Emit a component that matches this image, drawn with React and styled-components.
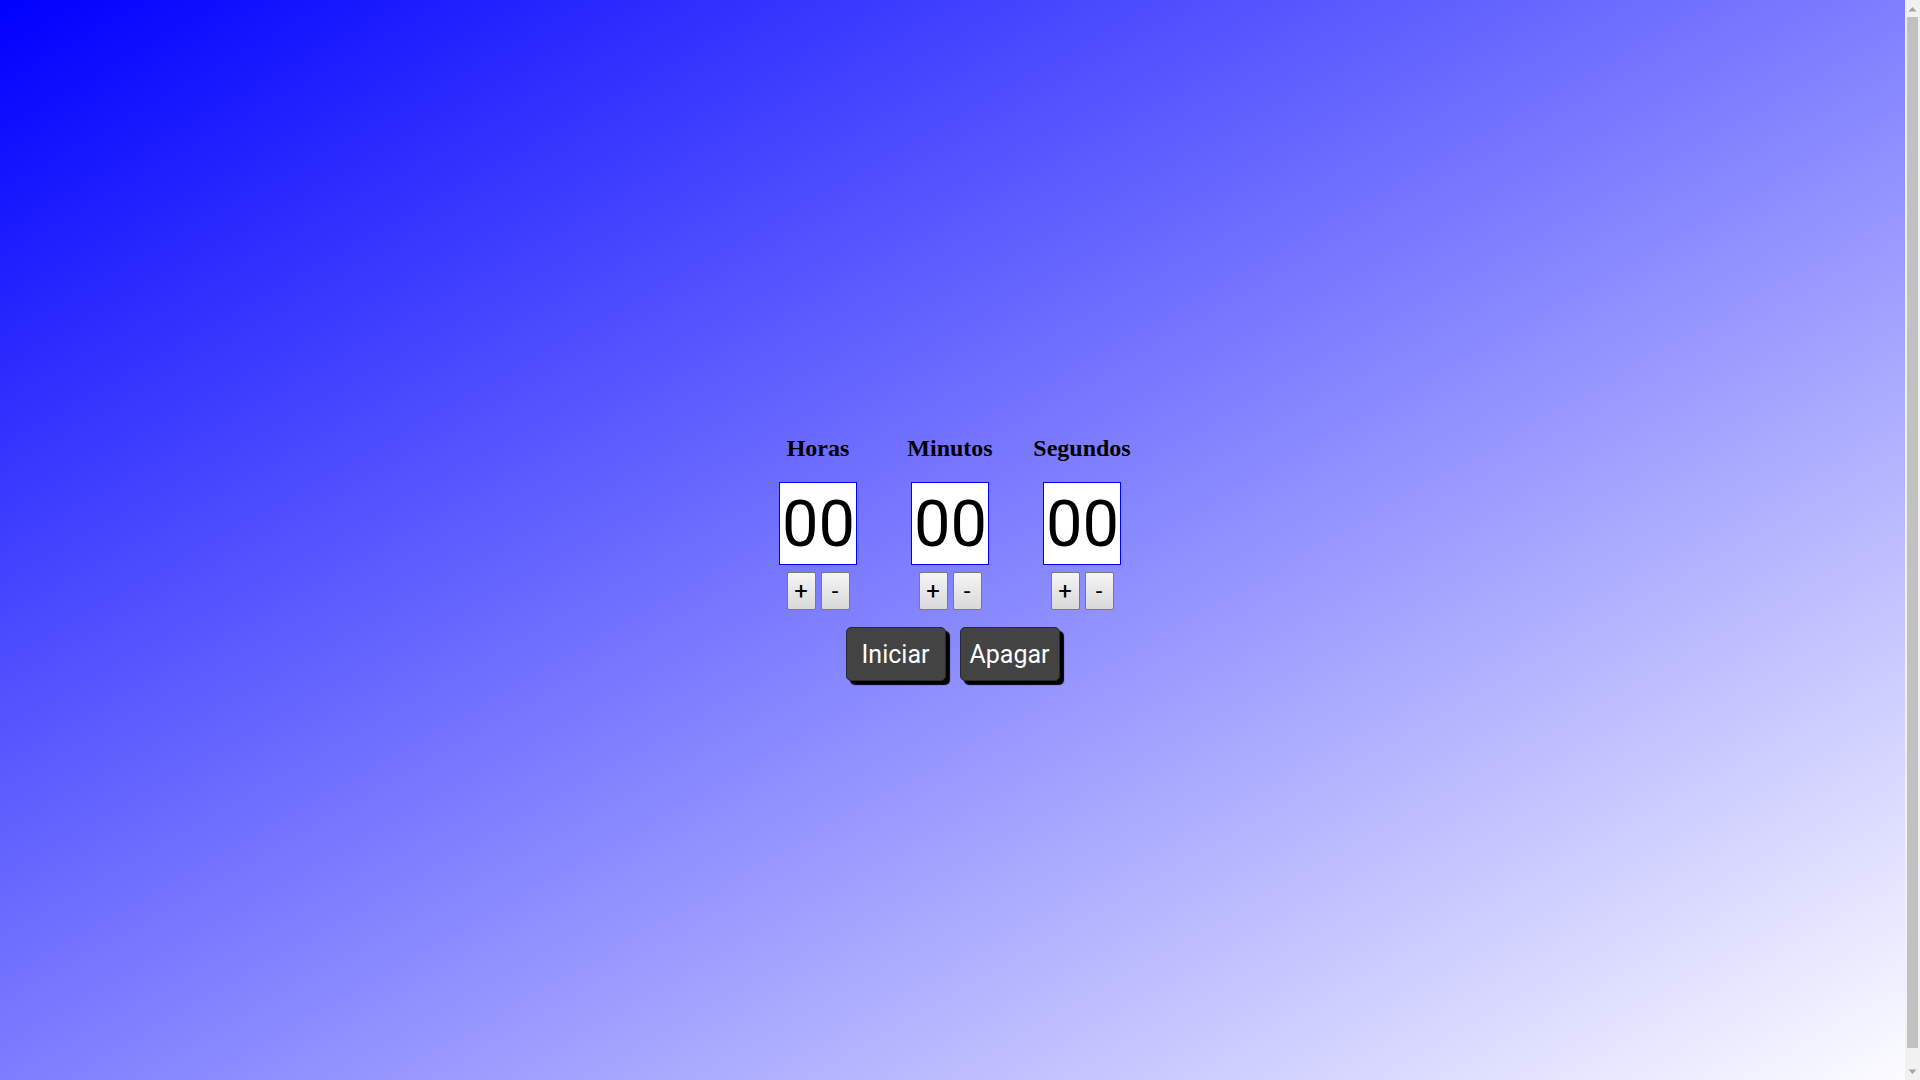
import React, { useState } from "react";
import styled, { createGlobalStyle } from "styled-components";

const GlobalStyle = createGlobalStyle`
  html {
    background: linear-gradient(to bottom right, #0000ff, #ffffff);
    min-height: 100%;
  }
  body {
    margin: 8px 23px 8px 8px;
    background: transparent;
    font-family: "Liberation Serif", "Times New Roman", serif;
  }
`;

const Page = styled.div`
  min-height: 100vh;
  display: flex;
  flex-direction: column;
  align-items: center;
  justify-content: center;
`;

const Units = styled.div`
  display: grid;
  grid-template-columns: repeat(3, 132px);
  margin-right: 5px;
`;

const Unit = styled.div`
  display: flex;
  flex-direction: column;
  align-items: center;
`;

const Label = styled.h2`
  margin: 20px 0;
  font-family: "Liberation Serif", "Times New Roman", serif;
  font-size: 24px;
  line-height: 27px;
  font-weight: bold;
  color: #000;
  white-space: nowrap;
`;

const Display = styled.input`
  box-sizing: border-box;
  width: 78px;
  height: 83px;
  padding: 1px 2px;
  border: 1px solid #0000ff;
  background: #ffffff;
  color: #000;
  font-family: Roboto, "Liberation Sans", sans-serif;
  font-size: 65px;
  outline: none;
`;

const StepRow = styled.div`
  display: flex;
  gap: 5px;
  margin-top: 7px;
`;

const StepButton = styled.button`
  box-sizing: border-box;
  width: 29px;
  height: 38px;
  padding: 0;
  border: 1px solid #7a7a7a;
  border-radius: 2px;
  background: linear-gradient(#f5f5f5, #d9d9d9);
  color: #000;
  font-family: Roboto, "Liberation Sans", sans-serif;
  font-size: 24px;
  line-height: 1;
  cursor: pointer;
`;

const Actions = styled.div`
  display: flex;
  gap: 14px;
  margin-top: 17px;
`;

const ActionButton = styled.button`
  box-sizing: border-box;
  width: 100px;
  height: 54px;
  padding: 0;
  border: 1px solid #2a2a2a;
  border-radius: 5px;
  background: #434343;
  color: #ffffff;
  font-family: Roboto, "Liberation Sans", sans-serif;
  font-size: 25px;
  box-shadow: 4px 4px 1px #000;
  cursor: pointer;
`;

const Scrollbar = styled.div`
  position: fixed;
  top: 0;
  right: 0;
  width: 15px;
  height: 100vh;
  background: #f1f1f1;
  display: flex;
  flex-direction: column;
`;

const ScrollArrow = styled.div`
  height: 17px;
  display: flex;
  align-items: center;
  justify-content: center;
  flex: none;
`;

const ScrollTrack = styled.div`
  flex: 1;
  display: flex;
  flex-direction: column;
  padding: 0 2px;
`;

const ScrollThumb = styled.div`
  flex: 1;
  margin-bottom: 15px;
  background: #c1c1c1;
`;

const Arrow = ({ down }) => (
  <svg width="9" height="6" viewBox="0 0 9 6">
    <polygon
      points={down ? "0.5,0.5 8.5,0.5 4.5,5" : "0.5,5.5 8.5,5.5 4.5,1"}
      fill="#a3a3a3"
    />
  </svg>
);

const pad = (n) => String(n).padStart(2, "0");

export default function App() {
  const [vals, setVals] = useState([0, 0, 0]);
  const units = ["Horas", "Minutos", "Segundos"];
  const max = [99, 59, 59];

  const change = (i, d) =>
    setVals((v) => v.map((x, j) => (j === i ? Math.min(max[j], Math.max(0, x + d)) : x)));

  return (
    <>
      <GlobalStyle />
      <Page>
        <Units>
          {units.map((u, i) => (
            <Unit key={u}>
              <Label>{u}</Label>
              <Display type="text" value={pad(vals[i])} readOnly />
              <StepRow>
                <StepButton onClick={() => change(i, 1)}>+</StepButton>
                <StepButton onClick={() => change(i, -1)}>-</StepButton>
              </StepRow>
            </Unit>
          ))}
        </Units>
        <Actions>
          <ActionButton>Iniciar</ActionButton>
          <ActionButton onClick={() => setVals([0, 0, 0])}>Apagar</ActionButton>
        </Actions>
      </Page>
      <Scrollbar>
        <ScrollArrow>
          <Arrow />
        </ScrollArrow>
        <ScrollTrack>
          <ScrollThumb />
        </ScrollTrack>
        <ScrollArrow>
          <Arrow down />
        </ScrollArrow>
      </Scrollbar>
    </>
  );
}
